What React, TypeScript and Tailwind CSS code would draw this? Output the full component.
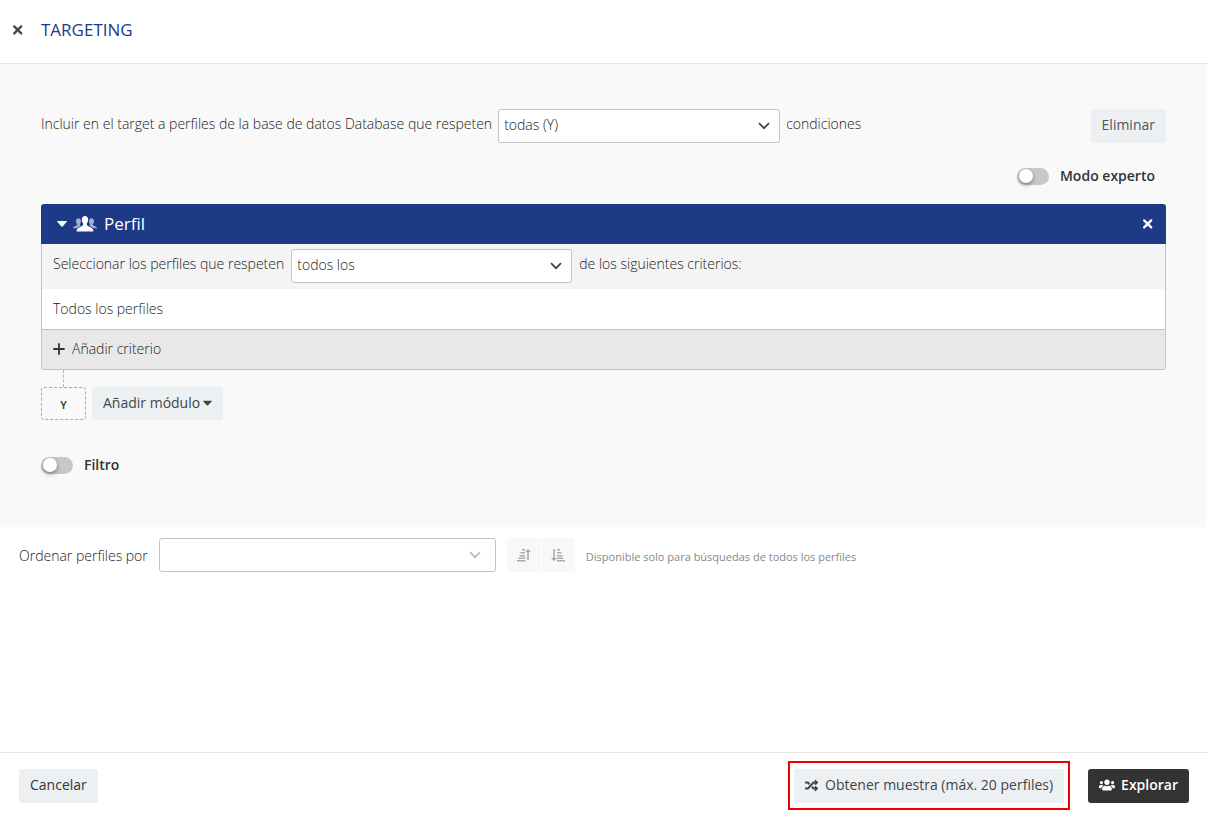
import { useState } from "react"
import { FaCaretDown, FaRandom, FaUsers } from "react-icons/fa"

const PeopleIcon = () => (
  <svg width="24" height="16" viewBox="0 0 24 16" fill="currentColor" aria-hidden="true">
    <g opacity="0.6">
      <path d="M5.500 2.200c1.500 0 2.500 1.100 2.500 2.800 0 1.300-.4 2.300-1 3 0 1 .2 1.200 1 1.600L3.500 12.300H0c0-1.200.8-1.700 2.500-2.400 1.300-.5 1.800-.9 1.800-1.900-.9-.7-1.300-1.700-1.300-3 0-1.700 1-2.800 2.500-2.800z" />
      <path d="M18.500 2.200c-1.500 0-2.500 1.100-2.500 2.800 0 1.300.4 2.300 1 3 0 1-.2 1.200-1 1.600l4.500 2.700H24c0-1.200-.8-1.700-2.500-2.400-1.300-.5-1.800-.9-1.800-1.900.9-.7 1.300-1.700 1.300-3 0-1.700-1-2.800-2.500-2.800z" />
    </g>
    <path d="M12 0c1.900 0 3.100 1.300 3.100 3.300 0 1.900-.5 3.200-1.300 4.200 0 2 .8 2.600 3 3.500 2.600 1 3.600 2 3.600 4.100v.4H3.600v-.4c0-2.100 1-3.100 3.600-4.100 2.200-.9 3-1.500 3-3.500-.8-1-1.300-2.300-1.300-4.200C8.900 1.300 10.100 0 12 0z" />
  </svg>
)

const CloseIcon = () => (
  <svg width="12" height="12" viewBox="0 0 12 12" fill="none" stroke="currentColor" strokeWidth="2.400" strokeLinecap="round" aria-hidden="true">
    <path d="M2.200 2.400l7 7M9.200 2.400l-7 7" />
  </svg>
)

const PlusIcon = () => (
  <svg width="12" height="12" viewBox="0 0 12 12" fill="none" stroke="#333" strokeWidth="1.800" strokeLinecap="round" aria-hidden="true">
    <path d="M6 1v10M1 6h10" />
  </svg>
)

const SortUpIcon = () => (
  <svg width="14" height="14" viewBox="0 0 14 14" fill="currentColor" aria-hidden="true">
    <path d="M5 1h3v1.500H5zM3.500 4H8v1.500H3.500zM2.500 7H8v1.500H2.500zM1.500 9.500h7V11h-7zM0 12h8.500v1.500H0z" />
    <path d="M11 1l3 3h-2.200v8h-1.600V4H8z" />
  </svg>
)

const SortDownIcon = () => (
  <svg width="14" height="14" viewBox="0 0 14 14" fill="currentColor" aria-hidden="true">
    <path d="M6 1h3v1.500H6zM6 4h4.500v1.500H6zM6 7h5.500v1.500H6zM6 9.500h6.500V11H6zM6 12h8v1.500H6z" />
    <path d="M3 13L0 10h2.200V1h1.600v9H6z" />
  </svg>
)

const Select = ({ id, label, options, className, disabled }: { id: string, label: string, options: Array<string>, className: string, disabled?: boolean }) => {
  return (
    <div className={`relative ${className}`}>
      <select
        id={id}
        aria-label={label}
        disabled={disabled}
        className="block h-[34px] w-full appearance-none rounded-[3px] border border-[#c4c4c4] bg-white pr-8 pb-[2px] pl-[5px] text-sm text-[#222]"
      >
        {options.map((option) => (
          <option key={option}>{option}</option>
        ))}
      </select>
      <svg
        width="12"
        height="8"
        viewBox="0 0 12 8"
        fill="none"
        stroke="currentColor"
        strokeWidth="1.8"
        className={`pointer-events-none absolute top-[13px] ${disabled ? "right-[15px] text-[#bbb]" : "right-[10px] text-[#444]"}`}
      >
        <path d="M1 1.200l5 5 5-5" />
      </svg>
    </div>
  )
}

const Switch = ({ label }: { label: string }) => {
  const [checked, setChecked] = useState(false)

  return (
    <label className="flex items-center gap-[11px] text-sm font-semibold text-[#333]">
      <input
        type="checkbox"
        role="switch"
        checked={checked}
        onChange={(e) => setChecked(e.target.checked)}
        className="flex h-[17px] w-8 appearance-none items-center rounded-full bg-[#c8c8c8] px-[2px] before:size-[14px] before:rounded-full before:bg-white before:shadow-[0_2px_4px_rgba(0,0,0,0.4)] checked:justify-end checked:bg-[#1d3a87]"
      />
      {label}
    </label>
  )
}

const App = () => {
  return (
    <div className="flex min-h-screen flex-col bg-white font-['Open_Sans',sans-serif] text-sm font-light text-[#222]">
      {/* Header */}
      <header className="flex h-16 items-center border-b border-[#e6e6e6] px-3 pb-1">
        <button type="button" aria-label="Cerrar" className="text-[#4a4a4a]">
          <CloseIcon />
        </button>
        <h1 className="ml-[17px] pt-[2px] text-[17px] font-medium text-[#1d3a87]">TARGETING</h1>
      </header>

      <main className="flex-1">
        <section className="bg-[#f9f9f9] px-[41px] pt-[45px] pb-[52px]">
          <div className="flex items-center justify-between">
            <div className="flex items-center gap-[6px]">
              <label htmlFor="conditions" className="pb-1">Incluir en el target a perfiles de la base de datos Database que respeten</label>
              <Select id="conditions" label="Condiciones" options={["todas (Y)", "una (O)"]} className="w-[282px]" />
              <span className="pb-1">condiciones</span>
            </div>
            <button type="button" className="h-[34px] rounded-[3px] bg-[#ecf0f3] px-[11px] pb-[2px] font-medium text-[#555]">Eliminar</button>
          </div>

          <div className="mt-[23px] flex justify-end pr-[11px]">
            <Switch label="Modo experto" />
          </div>

          {/* Module */}
          <div className="mt-[18px]">
            <div className="flex h-10 items-center rounded-t-[3px] bg-[#1d3a87] pr-3 pl-4 text-white">
              <button type="button" aria-label="Plegar">
                <svg width="10" height="6" viewBox="0 0 10 6" fill="currentColor">
                  <path d="M0 0.600Q0 0 1 0h8q1 0 1 .6L5.600 5.500Q5 6 4.400 5.500z" />
                </svg>
              </button>
              <span className="ml-[6px]"><PeopleIcon /></span>
              <h2 className="ml-[7px] text-[17px] font-medium">Perfil</h2>
              <button type="button" aria-label="Quitar módulo" className="ml-auto">
                <CloseIcon />
              </button>
            </div>
            <div className="rounded-b-[3px] border border-t-0 border-[#c4c4c4] bg-white">
              <div className="flex h-[45px] items-center gap-[7px] bg-[#f4f4f4] px-[11px] pb-[2px]">
                <label htmlFor="criteria" className="pb-1">Seleccionar los perfiles que respeten</label>
                <Select id="criteria" label="Criterios" options={["todos los", "uno de los"]} className="w-[281px]" />
                <span className="pb-1">de los siguientes criterios:</span>
              </div>
              <div className="flex h-10 items-center px-[11px]">Todos los perfiles</div>
              <button type="button" className="flex h-10 w-full items-center gap-[7px] border-t border-[#c4c4c4] bg-[#e8e8e8] px-[11px] pb-[2px]">
                <PlusIcon />
                Añadir criterio
              </button>
            </div>
          </div>

          <div className="ml-[22px] h-[17px] w-px border-l border-dashed border-[#b4b4b4]" />
          <div className="flex gap-[6px]">
            <span className="flex h-[33px] w-[45px] items-center justify-center rounded-[3px] border border-dashed border-[#aaa] pt-[2px] text-[11px] font-semibold text-[#333]">Y</span>
            <button type="button" className="flex h-[33px] items-center gap-px rounded-l-[3px] bg-[#ecf0f3] pr-[9px] pl-[11px] pb-[2px] font-medium text-[#444]">
              Añadir módulo
              <FaCaretDown size={15} className="-mx-px" />
            </button>
          </div>

          <div className="mt-[35px]">
            <Switch label="Filtro" />
          </div>
        </section>

        {/* Sorting */}
        <section className="flex items-center px-[19px] pt-[11px]">
          <label htmlFor="order" className="pt-[2px]">Ordenar perfiles por</label>
          <Select id="order" label="Ordenar perfiles por" options={[""]} className="ml-[11px] w-[337px]" disabled />
          <div className="ml-[11px] flex gap-px text-[#aaa]">
            <button type="button" disabled aria-label="Ascendente" className="flex h-[34px] w-[34px] items-center justify-center rounded-l-[3px] bg-[#f6f8fa]">
              <SortUpIcon />
            </button>
            <button type="button" disabled aria-label="Descendente" className="flex h-[34px] w-[33px] items-center justify-center rounded-r-[3px] bg-[#f6f8fa]">
              <SortDownIcon />
            </button>
          </div>
          <p className="ml-[11px] pt-[3px] text-[11px] font-normal text-[#888]">Disponible solo para búsquedas de todos los perfiles</p>
        </section>
      </main>

      {/* Actions */}
      <footer className="flex items-center justify-between border-t border-[#e6e6e6] pt-2 pr-[18px] pb-1 pl-[19px]">
        <button type="button" className="h-[34px] rounded-[3px] bg-[#ecf0f3] px-[11px] pb-[2px] font-medium text-[#333]">Cancelar</button>
        <div className="flex items-center gap-[18px]">
          <div className="border-2 border-[#f00000] px-1 pt-[6px] pb-[5px]">
            <button type="button" className="flex h-[34px] items-center gap-[7px] rounded-[3px] bg-[#ecf0f3] px-[11px] pb-[2px] font-medium text-[#444]">
              <FaRandom size={13} />
              Obtener muestra (máx. 20 perfiles)
            </button>
          </div>
          <button type="button" className="flex h-[34px] items-center gap-[6px] rounded-[3px] bg-[#333] px-[11px] pb-[2px] font-semibold text-white">
            <FaUsers size={16} />
            Explorar
          </button>
        </div>
      </footer>
    </div>
  )
}

export default App
